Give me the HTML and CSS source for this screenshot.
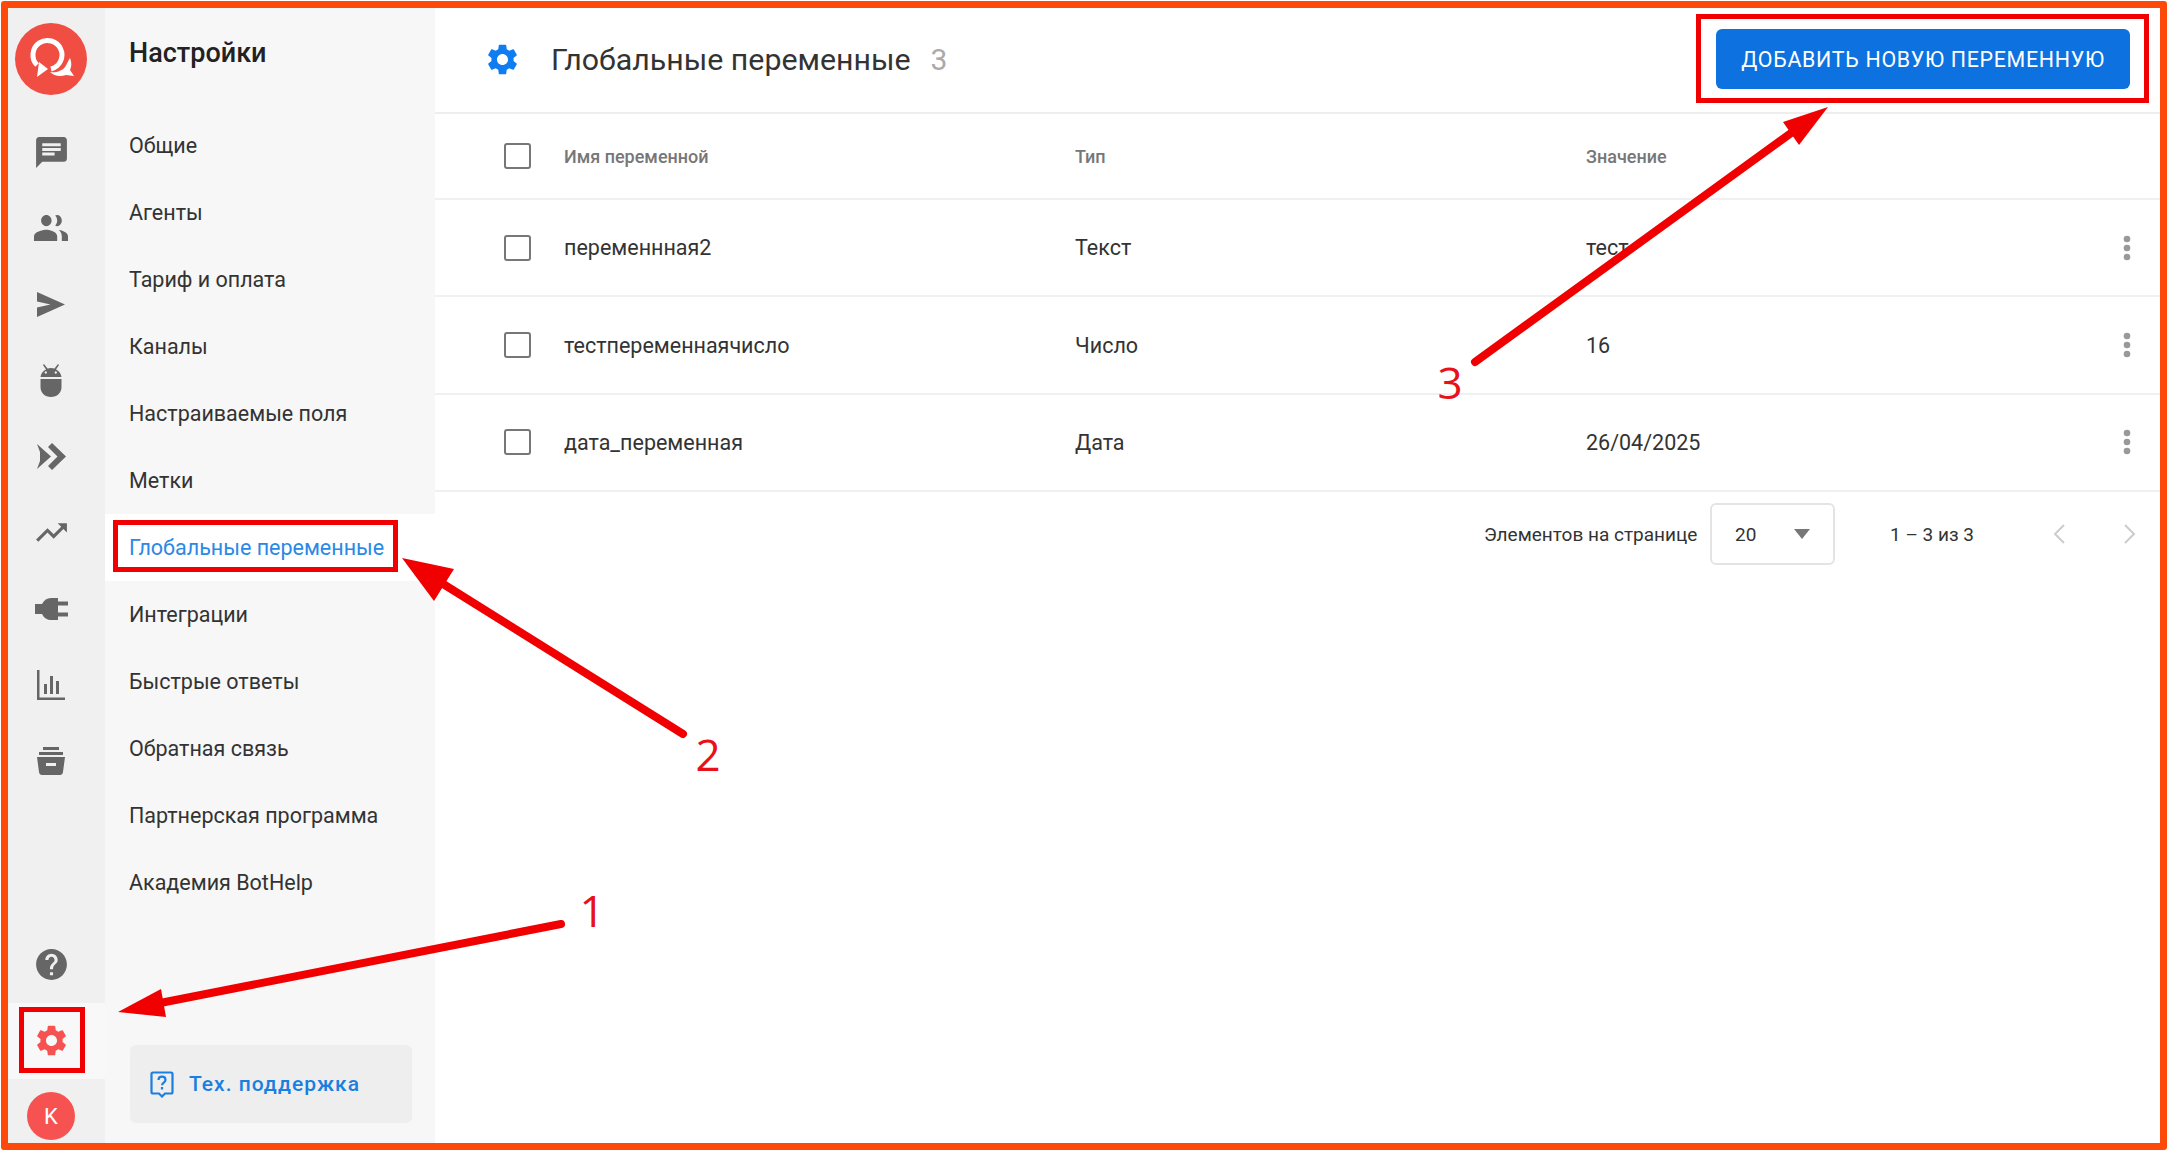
FILE: index.html
```html
<html>
  <head>
    <title>Глобальные переменные</title>
    <meta charset="utf-8">
    <link rel="stylesheet" href="styles.css">
  </head>
  <body>
    <svg class="defs" width="0" height="0">
      <symbol id="gear" viewBox="0 0 24 24"><path d="M19.14 12.94c.04-.3.06-.61.06-.94 0-.32-.02-.64-.07-.94l2.03-1.58c.18-.14.23-.41.12-.61l-1.92-3.32c-.12-.22-.37-.29-.59-.22l-2.39.96c-.5-.38-1.03-.7-1.62-.94l-.36-2.54c-.04-.24-.24-.41-.48-.41h-3.84c-.24 0-.43.17-.47.41l-.36 2.54c-.59.24-1.13.57-1.62.94l-2.39-.96c-.22-.08-.47 0-.59.22L2.74 8.87c-.12.21-.08.47.12.61l2.03 1.58c-.05.3-.09.63-.09.94s.02.64.07.94l-2.03 1.58c-.18.14-.23.41-.12.61l1.92 3.32c.12.22.37.29.59.22l2.39-.96c.5.38 1.03.7 1.62.94l.36 2.54c.05.24.24.41.48.41h3.84c.24 0 .44-.17.47-.41l.36-2.54c.59-.24 1.13-.56 1.62-.94l2.39.96c.22.08.47 0 .59-.22l1.92-3.32c.12-.22.07-.47-.12-.61l-2.01-1.58zM12 15.6c-1.98 0-3.6-1.62-3.6-3.6s1.62-3.6 3.6-3.6 3.6 1.62 3.6 3.6-1.62 3.6-3.6 3.6z"/></symbol>
      <symbol id="dots" viewBox="0 0 8 26"><circle cx="4" cy="4" r="3.3"/><circle cx="4" cy="13" r="3.3"/><circle cx="4" cy="22" r="3.3"/></symbol>
    </svg>

    <div class="frame">
      <nav class="rail">
        <div class="logo-row">
          <svg class="logo" viewBox="0 0 72 72">
            <circle cx="36" cy="36" r="36" fill="#f04d43"/>
            <path d="M22 42A14.500 14.500 0 1 1 36 46" fill="none" stroke="#fff" stroke-width="5"/>
            <path d="M22 54l2-15 9 7z" fill="#fff"/>
            <path d="M55 35c2 5 1.500 9 0 12l4 6-8-1c-6 2-12 1-16-3 6 1 12-1 15-5 2-3 3-6 5-9z" fill="#fff"/>
          </svg>
        </div>
        <a class="rail-item"><svg width="37" height="37" viewBox="0 0 24 24"><path d="M20 2H4c-1.1 0-1.99.9-1.99 2L2 22l4-4h14c1.1 0 2-.9 2-2V4c0-1.1-.9-2-2-2zM6 9h12v2H6V9zm8 5H6v-2h8v2zm4-6H6V6h12v2z"/></svg></a>
        <a class="rail-item"><svg width="34" height="26" viewBox="1 5 22 14" preserveAspectRatio="none"><path d="M16 11c1.66 0 2.99-1.34 2.99-3S17.66 5 16 5c-.5 0-.9.1-1.3.3C15.500 6 16 7 16 8s-.5 2-1.300 2.700c.4.200.8.300 1.300.300zm-7 0c1.900 0 3.400-1.340 3.400-3S10.900 5 9 5C7.100 5 5.600 6.340 5.600 8S7.100 11 9 11zm0 2c-2.600 0-8 1.170-8 3.500V19h15v-2.500c0-2.330-4.400-3.500-7-3.500zm8 .1c1.300.9 2 2 2 3.400V19h4v-2.500c0-2-3.500-3.200-6-3.400z"/></svg></a>
        <a class="rail-item"><svg width="28" height="25" viewBox="0 0 27 24"><path d="M0 0l27 12L0 24v-9l13-3L0 9z"/></svg></a>
        <a class="rail-item"><svg width="22" height="33" viewBox="0 0 22 33"><path d="M4 0l3.500 4.500C9.800 3.800 12.200 3.800 14.500 4.500L18 0l1 1-3 4.500c3 1.500 5 4 5.500 7.500H.5C1 9.500 3 7 6 5.500L3 1zM7 8.500a1.200 1.200 0 1 0 0 .1zM17 8.500a1.200 1.200 0 1 0 0 .1zM.5 15h21v8c0 6-4.500 10-10.500 10S.5 29 .5 23z"/></svg></a>
        <a class="rail-item"><svg width="29" height="27" viewBox="0 0 29 27"><path d="M0 1l14 12.500L0 26l3-8V9z"/><path d="M15 0l14 13.500L15 27l-4-4 9.500-9.500L11 4z"/></svg></a>
        <a class="rail-item"><svg width="37" height="37" viewBox="0 0 24 24"><path d="M16 6l2.290 2.290-4.880 4.880-4-4L2 16.590 3.410 18l6-6 4 4 6.300-6.290L22 12V6z"/></svg></a>
        <a class="rail-item"><svg width="33" height="22" viewBox="0 0 33 22"><path d="M0 6h7C9 2 12 0 16 0h7v22h-7c-4 0-7-2-9-6H0zM23 3.500h10v4H23zM23 14.500h10v4H23z"/></svg></a>
        <a class="rail-item"><svg width="28" height="30" viewBox="0 0 28 30"><path d="M0 0h2.500v27.500H28V30H0zM7 14h3v10H7zM13 6h3v18h-3zM19 11h3v13h-3z"/></svg></a>
        <a class="rail-item"><svg width="28" height="28" viewBox="0 0 28 28"><path d="M6 0h16v3H6zM2 5h24v3H2zM0 10h28l-2 15c-.2 2-1.500 3-3 3H5c-1.500 0-2.800-1-3-3zM9 16v3h10v-3z" fill-rule="evenodd"/></svg></a>
        <a class="rail-item rail-help"><svg width="37" height="37" viewBox="0 0 24 24"><path d="M12 2C6.480 2 2 6.480 2 12s4.480 10 10 10 10-4.480 10-10S17.520 2 12 2zm1 17h-2v-2h2v2zm2.070-7.750l-.9.920C13.450 12.900 13 13.500 13 15h-2v-.5c0-1.100.45-2.100 1.170-2.830l1.240-1.260c.37-.36.59-.86.59-1.410 0-1.100-.9-2-2-2s-2 .9-2 2H8c0-2.210 1.790-4 4-4s4 1.790 4 4c0 .88-.36 1.680-.93 2.250z"/></svg></a>
        <a class="rail-item rail-active"><svg width="37" height="37"><use href="#gear"/></svg></a>
        <div class="avatar-row"><span class="avatar">K</span></div>
      </nav>

      <aside class="panel">
        <h1 class="panel-title">Настройки</h1>
        <ul class="menu">
          <li>Общие</li>
          <li>Агенты</li>
          <li>Тариф и оплата</li>
          <li>Каналы</li>
          <li>Настраиваемые поля</li>
          <li>Метки</li>
          <li class="active">Глобальные переменные</li>
          <li>Интеграции</li>
          <li>Быстрые ответы</li>
          <li>Обратная связь</li>
          <li>Партнерская программа</li>
          <li>Академия BotHelp</li>
        </ul>
        <a class="support">
          <svg width="24" height="27" viewBox="0 0 24 27" fill="none" stroke="#1a7fe0" stroke-width="2.200"><path d="M3 1.500h18c.9 0 1.500.6 1.500 1.500v18c0 .9-.6 1.500-1.500 1.500h-6L12 25.500 9 22.500H3c-.9 0-1.500-.6-1.500-1.500V3c0-.9.600-1.500 1.500-1.500z"/><path d="M8.500 9c0-2 1.500-3.300 3.500-3.300s3.500 1.300 3.500 3.200c0 2.600-3.500 2.700-3.500 5.400"/><path d="M12 16v2.500"/></svg>
          <span>Тех. поддержка</span>
        </a>
      </aside>

      <main class="main">
        <header class="topbar">
          <svg class="title-gear" width="37" height="37"><use href="#gear"/></svg>
          <h2 class="page-title">Глобальные переменные</h2>
          <span class="count">3</span>
          <button class="add-btn">ДОБАВИТЬ НОВУЮ ПЕРЕМЕННУЮ</button>
        </header>

        <div class="row row-head">
          <i class="check"></i><span>Имя переменной</span><span>Тип</span><span>Значение</span>
        </div>
        <div class="row">
          <i class="check"></i><span>переменнная2</span><span>Текст</span><span>тест</span>
          <svg class="dots" width="8" height="26"><use href="#dots"/></svg>
        </div>
        <div class="row">
          <i class="check"></i><span>тестпеременнаячисло</span><span>Число</span><span>16</span>
          <svg class="dots" width="8" height="26"><use href="#dots"/></svg>
        </div>
        <div class="row">
          <i class="check"></i><span>дата_переменная</span><span>Дата</span><span>26/04/2025</span>
          <svg class="dots" width="8" height="26"><use href="#dots"/></svg>
        </div>

        <div class="pager">
          <span class="pager-label">Элементов на странице</span>
          <div class="select"><span>20</span><i class="caret"></i></div>
          <span class="pager-range">1 – 3 из 3</span>
          <svg class="chev" width="14" height="22" viewBox="0 0 14 22"><path d="M12 2L3 11l9 9"/></svg>
          <svg class="chev" width="14" height="22" viewBox="0 0 14 22"><path d="M2 2l9 9-9 9"/></svg>
        </div>
      </main>
    </div>

    <!-- red annotations drawn over the screenshot -->
    <svg class="notes" width="2172" height="1155">
      <rect class="box" x="21.500" y="1009.500" width="61" height="61"/>
      <rect class="box" x="115.500" y="522.500" width="280" height="47"/>
      <rect class="box" x="1698.500" y="16.500" width="448" height="84"/>

      <line class="shaft" x1="561" y1="924" x2="150" y2="1005"/>
      <polygon class="head" points="118,1012 161,989 166,1017"/>
      <line class="shaft" x1="683" y1="734" x2="440" y2="582"/>
      <polygon class="head" points="402,558 454,569 434,601"/>
      <line class="shaft" x1="1475" y1="362" x2="1798" y2="128"/>
      <polygon class="head" points="1828,107 1783,122 1799,145"/>

      <text class="num" x="592" y="927">1</text>
      <text class="num" x="708" y="771">2</text>
      <text class="num" x="1450" y="399">3</text>
    </svg>
  </body>
</html>
```

FILE: styles.css
```css
* {
  box-sizing: border-box;
}
body {
  margin: 0;
  width: 2172px;
  height: 1155px;
  overflow: hidden;
  background: #fff;
  font-family: Roboto, sans-serif;
  color: #333;
}
.defs {
  position: absolute;
}

.frame {
  display: flex;
  width: 2166px;
  height: 1149px;
  margin: 1px 0 0 1px;
  border: 7px solid #fd4a0a;
  border-radius: 3px;
}

/* icon rail */
.rail {
  display: flex;
  flex-direction: column;
  flex: 0 0 97px;
  background: #f0f0f0;
}
.logo-row {
  height: 106px;
  padding: 15px 0 0 7px;
}
.logo {
  display: block;
  width: 72px;
  height: 72px;
}
.rail-item {
  display: flex;
  align-items: center;
  justify-content: center;
  height: 76.1px;
  padding-right: 11px;
}
.rail-item svg {
  fill: #666;
}
.rail-help {
  margin-top: auto;
}
.rail-active {
  background: #f8f8f8;
}
.rail-active svg {
  fill: #f75252;
}
.avatar-row {
  height: 64px;
  padding: 13px 0 0 19px;
}
.avatar {
  display: flex;
  align-items: center;
  justify-content: center;
  width: 48px;
  height: 48px;
  border-radius: 50%;
  background: #f75252;
  color: #fff;
  font-size: 22px;
}

/* settings menu */
.panel {
  display: flex;
  flex-direction: column;
  flex: 0 0 330px;
  background: #f7f7f7;
}
.panel-title {
  height: 103.5px;
  margin: 0;
  padding: 27px 0 0 24px;
  font-size: 27px;
  line-height: 36px;
  font-weight: 500;
  color: #222;
}
.menu {
  margin: 0;
  padding: 0;
  list-style-type: none;
}
.menu li {
  height: 67px;
  padding-left: 24px;
  font-size: 21.5px;
  line-height: 67px;
}
.menu li.active {
  background: #fff;
  color: #2b88e6;
}
.support {
  display: flex;
  align-items: center;
  gap: 15px;
  height: 78px;
  margin: auto 23px 20px 25px;
  padding-left: 20px;
  background: #eee;
  border-radius: 6px;
  color: #1a7fe0;
  font-size: 21px;
  font-weight: 500;
  letter-spacing: 1px;
}

/* main table */
.main {
  flex: 1;
  min-width: 0;
  background: #fff;
}
.topbar {
  display: flex;
  align-items: center;
  height: 106px;
  padding: 0 30px 2px 49px;
  border-bottom: 2px solid #eee;
}
.title-gear {
  fill: #0f7cf2;
}
.page-title {
  margin: 0 0 0 30px;
  font-size: 30.3px;
  font-weight: 400;
  color: #333;
}
.count {
  margin-left: 20px;
  font-size: 30px;
  color: #aaa;
}
.add-btn {
  margin-left: auto;
  width: 414px;
  height: 60px;
  padding: 0;
  border: none;
  border-radius: 6px;
  background: #0d72e0;
  color: #fff;
  font-family: Roboto, sans-serif;
  font-size: 21.4px;
  letter-spacing: 0.7px;
}
.row {
  display: grid;
  grid-template-columns: 60px 511px 511px 1fr 8px;
  align-items: center;
  height: 97.4px;
  padding: 0 29px 0 69px;
  border-bottom: 2px solid #f0f0f0;
  font-size: 21.5px;
}
.row-head {
  height: 86px;
  font-size: 18px;
  font-weight: 500;
  color: #777;
}
.check {
  display: block;
  width: 27px;
  height: 26px;
  border: 2px solid #777;
  border-radius: 3px;
}
.dots {
  fill: #999;
}

.pager {
  display: flex;
  align-items: center;
  height: 62px;
  margin-top: 11px;
  padding-left: 1049px;
  font-size: 19px;
}
.pager-label {
  width: 226px;
}
.select {
  display: flex;
  align-items: center;
  justify-content: space-between;
  width: 125px;
  height: 62px;
  padding: 0 23px;
  border: 2px solid #e4e4e4;
  border-radius: 6px;
  font-size: 19px;
}
.caret {
  border-left: 8px solid transparent;
  border-right: 8px solid transparent;
  border-top: 10px solid #777;
}
.pager-range {
  width: 162px;
  margin-left: 55px;
}
.chev {
  margin-right: 57px;
  fill: none;
  stroke: #ccc;
  stroke-width: 2;
}
.chev:last-child {
  margin-right: 0;
}

/* annotations */
.notes {
  position: absolute;
  top: 0;
  left: 0;
}
.box {
  fill: none;
  stroke: #f00000;
  stroke-width: 5;
}
.shaft {
  stroke: #f00000;
  stroke-width: 8;
  stroke-linecap: round;
}
.head {
  fill: #f00000;
}
.num {
  fill: #e8111a;
  font-family: "Open Sans", sans-serif;
  font-size: 44px;
  text-anchor: middle;
}
```
